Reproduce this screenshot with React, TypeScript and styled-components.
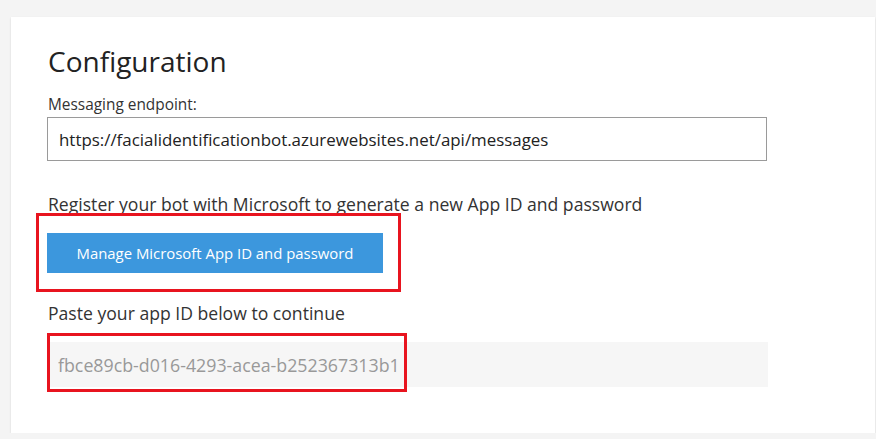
import React from 'react';
import styled, { createGlobalStyle } from 'styled-components';

const GlobalStyle = createGlobalStyle`
  html, body {
    margin: 0;
    padding: 0;
    background: #f4f4f4;
  }
  body {
    font-family: "Open Sans", "Noto Sans", "Liberation Sans", sans-serif;
    color: #2b2b2b;
  }
`;

const Page = styled.div`
  padding: 17px 1px 0 11px;
`;

const Card = styled.section`
  background: #ffffff;
  height: 416px;
  box-sizing: border-box;
  padding: 26px 0 0 37px;
  box-shadow: 0 1px 2px rgba(0, 0, 0, 0.12);
  display: flex;
  flex-direction: column;
  align-items: flex-start;
`;

const Title = styled.h1`
  margin: 0;
  font-size: 28px;
  line-height: 36px;
  font-weight: 400;
  color: #222;
`;

const Label = styled.label`
  margin-top: 16px;
  font-size: 15.4px;
  line-height: 20px;
  color: #333;
`;

const Hint = styled.p<{ $gap: number }>`
  margin: ${(p) => p.$gap}px 0 0;
  font-size: 17.6px;
  line-height: 22px;
  color: #333;
`;

const Field = styled.input<{ $muted?: boolean }>`
  box-sizing: border-box;
  width: 720px;
  height: ${(p) => (p.$muted ? 45 : 44)}px;
  padding: 0 10px;
  font-family: inherit;
  font-size: ${(p) => (p.$muted ? 17.8 : 16.9)}px;
  outline: none;
  border: ${(p) => (p.$muted ? 'none' : '1px solid #9a9a9a')};
  background: ${(p) => (p.$muted ? '#f6f6f6' : '#fff')};
  color: ${(p) => (p.$muted ? '#999' : '#222')};
`;

const EndpointField = styled(Field)`
  margin: 2px 0 0 -1px;
  padding-left: 11px;
`;

const Marked = styled.div<{ $gap: number }>`
  position: relative;
  margin-top: ${(p) => p.$gap}px;
`;

const Highlight = styled.div<{ $l: number; $t: number; $w: number; $h: number }>`
  position: absolute;
  left: ${(p) => p.$l}px;
  top: ${(p) => p.$t}px;
  width: ${(p) => p.$w}px;
  height: ${(p) => p.$h}px;
  box-sizing: border-box;
  border: 3px solid #e8141f;
  pointer-events: none;
`;

const PrimaryButton = styled.button`
  display: block;
  width: 336px;
  height: 40px;
  margin-left: -1px;
  border: none;
  background: #3c97dd;
  color: #fff;
  font-family: inherit;
  font-size: 14.9px;
  cursor: pointer;
`;

export default function App() {
  return (
    <>
      <GlobalStyle />
      <Page>
        <Card>
          <Title>Configuration</Title>
          <Label>Messaging endpoint:</Label>
          <EndpointField
            readOnly
            value="https://facialidentificationbot.azurewebsites.net/api/messages"
          />
          <Hint $gap={32}>Register your bot with Microsoft to generate a new App ID and password</Hint>
          <Marked $gap={18}>
            <PrimaryButton>Manage Microsoft App ID and password</PrimaryButton>
            <Highlight $l={-12} $t={-20} $w={365} $h={79} />
          </Marked>
          <Hint $gap={29}>Paste your app ID below to continue</Hint>
          <Marked $gap={18}>
            <Field $muted readOnly value="fbce89cb-d016-4293-acea-b252367313b1" />
            <Highlight $l={-1} $t={-9} $w={360} $h={59} />
          </Marked>
        </Card>
      </Page>
    </>
  );
}
